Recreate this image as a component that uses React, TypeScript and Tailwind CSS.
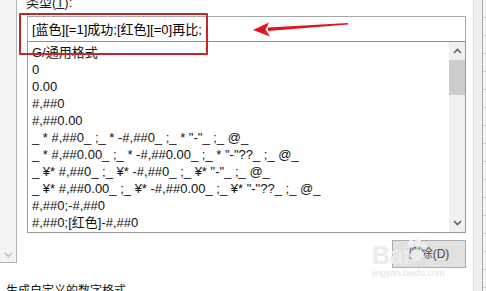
import React from 'react'

const formats = [
    'G/通用格式',
    '0',
    '0.00',
    '#,##0',
    '#,##0.00',
    '_ * #,##0_ ;_ * -#,##0_ ;_ * "-"_ ;_ @_',
    '_ * #,##0.00_ ;_ * -#,##0.00_ ;_ * "-"??_ ;_ @_',
    '_ ¥* #,##0_ ;_ ¥* -#,##0_ ;_ ¥* "-"_ ;_ @_',
    '_ ¥* #,##0.00_ ;_ ¥* -#,##0.00_ ;_ ¥* "-"??_ ;_ @_',
    '#,##0;-#,##0',
    '#,##0;[红色]-#,##0',
]

function Chevron({ up, color = '#5f5f5f' }: { up?: boolean; color?: string }) {
    return (
        <svg width="9" height="6" viewBox="0 0 9 6">
            <path
                d={up ? 'M1 5 L4.5 1.5 L8 5' : 'M1 1 L4.5 4.5 L8 1'}
                fill="none"
                stroke={color}
                strokeWidth="1.6"
            />
        </svg>
    )
}

export default function App() {
    return (
        <div className="relative w-[486px] h-[291px] overflow-hidden bg-white text-black font-['Liberation_Sans','Noto_Sans_CJK_SC',sans-serif] flex">
            <div className="w-[466px] shrink-0 flex flex-col">
                <div className="h-[279px] flex shrink-0">
                    {/* panel edge on the left */}
                    <div className="w-[17px] h-[263px] shrink-0 bg-[#f3f3f3] border-r border-b border-[#b4b4b4] flex flex-col justify-end items-center pb-[4px]">
                        <Chevron color="#c2c2c2" />
                    </div>

                    <div className="flex-1 pl-[10px] flex flex-col">
                        <div className="-mt-[6px] -ml-px h-[17px] text-[13px] leading-[17px] text-[#1a1a1a]">
                            类型(<span className="underline">T</span>):
                        </div>
                        <div className="mt-[5px] h-[26px] border border-[#a8a8a8] border-b-[#8e8e8e] flex items-center pl-[4px] text-[13px] leading-[17px] whitespace-pre">
                            [蓝色][=1]成功;[红色][=0]再比;
                        </div>
                        <div className="h-[191px] border border-t-0 border-[#9a9a9a] flex">
                            <div className="flex-1 overflow-hidden pt-[2px] pl-[4px]">
                                {formats.map((f) => (
                                    <div key={f} className="h-[17px] text-[13px] leading-[17px] whitespace-pre text-[#111]">
                                        {f}
                                    </div>
                                ))}
                            </div>
                            <div className="w-[16px] bg-[#f0f0f0] flex flex-col">
                                <div className="h-[18px] flex items-center justify-center">
                                    <Chevron up />
                                </div>
                                <div className="h-[35px] bg-[#cdcdcd]" />
                                <div className="flex-1" />
                                <div className="h-[18px] flex items-center justify-center">
                                    <Chevron />
                                </div>
                            </div>
                        </div>
                        <div className="mt-[7px] self-end w-[74px] h-[28px] bg-[#e1e1e1] border border-[#adadad] flex items-center justify-center text-[12px] text-[#4a4a4a]">
                            删除(D)
                        </div>
                    </div>
                </div>
                <div className="mt-[4px] pl-[6px] text-[12px] leading-[16px] whitespace-nowrap text-[#111]">
                    生成自定义的数字格式。
                </div>
            </div>

            {/* worksheet behind the dialog */}
            <div className="flex-1 flex h-full">
                <div className="w-[7px] bg-white" />
                <div className="w-px bg-[#dcdcdc]" />
                <div className="w-[8px] bg-[#f0f0f0]" />
                <div className="w-px bg-[#a9a9a9]" />
                <div className="flex-1 bg-[#f6f6f6] flex flex-col">
                    {Array.from({ length: 17 }).map((_, i) => (
                        <div key={i} className="h-[18px] shrink-0 border-b border-[#cfcfcf]" />
                    ))}
                </div>
            </div>

            {/* red annotation box and arrow */}
            <div className="absolute left-[19px] top-[13px] w-[189px] h-[42px] border-2 border-[#c4262e] rounded-[1px]" />
            <svg className="absolute left-0 top-0" width="486" height="60" viewBox="0 0 486 60">
                <path d="M268 27.5 L348 23 L348 24.6 L268 31 Z" fill="#e3141b" />
                <path d="M253 30 L269 22.5 L265.5 29.5 L270 36.5 Z" fill="#e3141b" />
            </svg>

            {/* watermark */}
            <div className="absolute left-[372px] top-[242px] text-[25px] leading-[26px] font-bold text-[#ececec] tracking-tight">
                Bai
            </div>
            <svg className="absolute left-[405px] top-[238px]" width="24" height="26" viewBox="0 0 24 26">
                <g fill="#f3f3f3" opacity="0.9">
                    <ellipse cx="6" cy="6" rx="3" ry="4" />
                    <ellipse cx="13" cy="4" rx="3" ry="4" />
                    <ellipse cx="19" cy="8" rx="2.6" ry="3.4" />
                    <ellipse cx="12" cy="17" rx="7" ry="6" />
                </g>
            </svg>
            <div className="absolute left-[372px] top-[268px] text-[9px] leading-[10px] text-[#e2e2e2]">
                jingyan.baidu.com
            </div>
        </div>
    )
}
